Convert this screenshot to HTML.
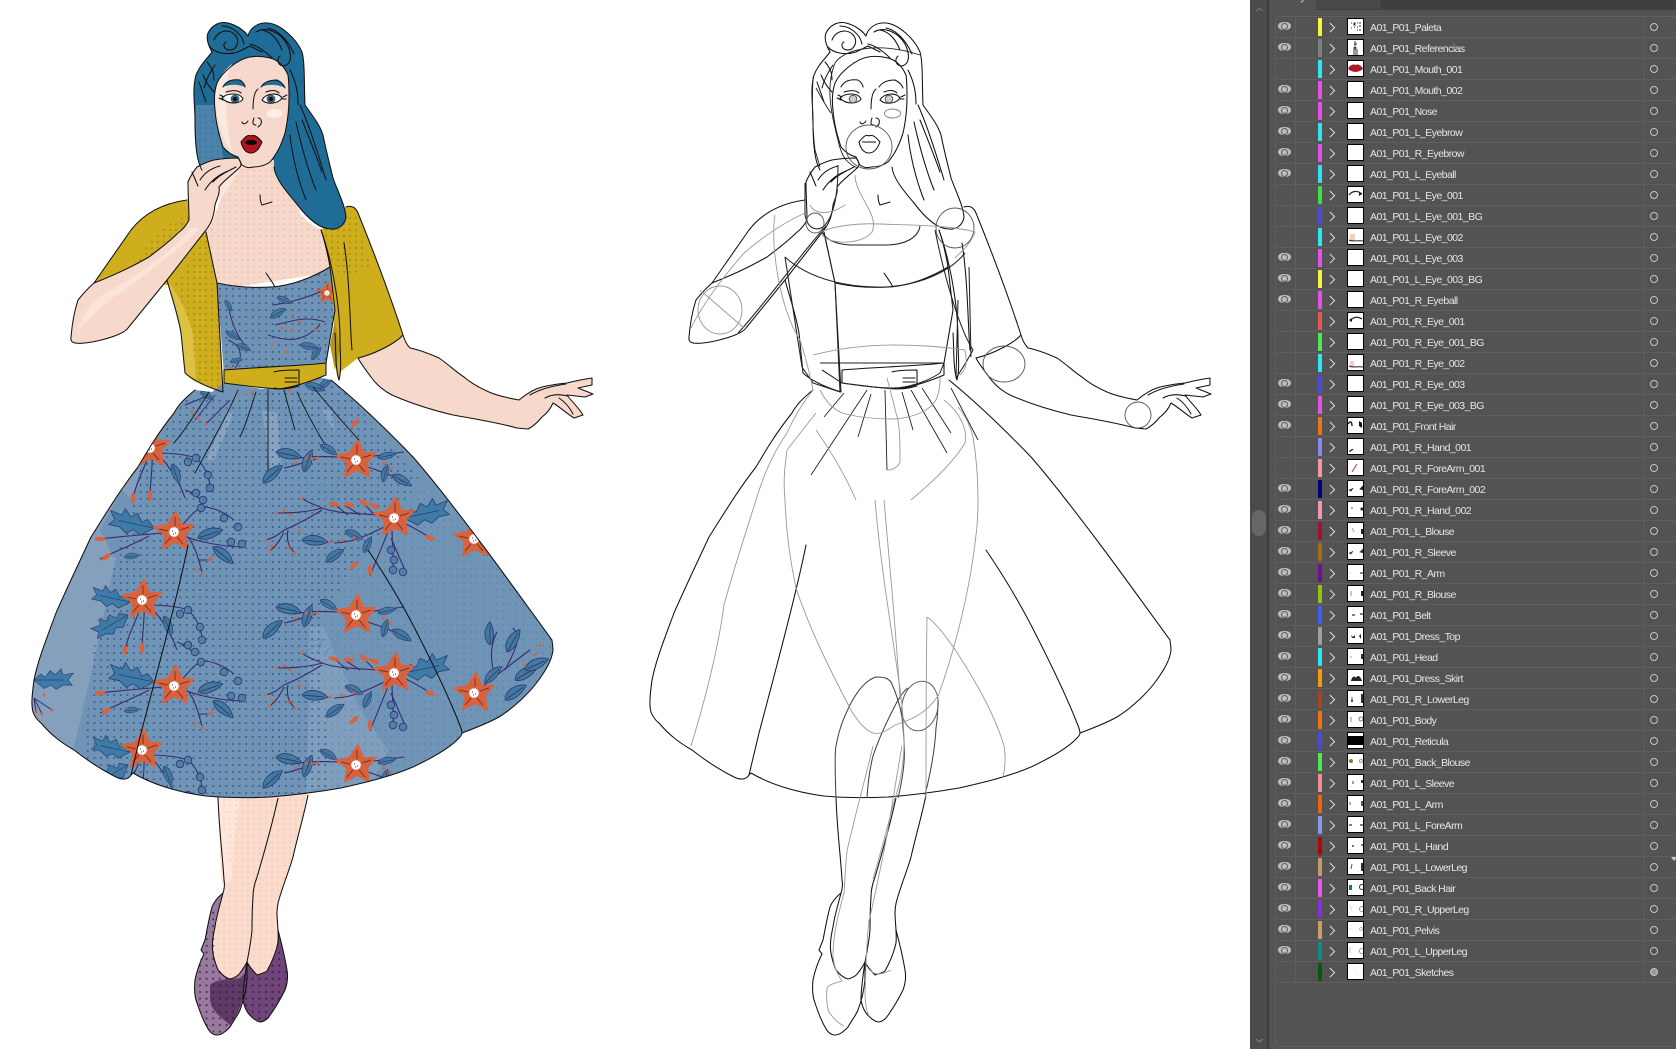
<!DOCTYPE html>
<html><head><meta charset="utf-8"><title>A01_P01</title>
<style>
html,body{margin:0;padding:0;background:#fff}
body{width:1676px;height:1049px;overflow:hidden;position:relative;font-family:"Liberation Sans",sans-serif}
#art{position:absolute;left:0;top:0}
#p{position:absolute;left:1250px;top:0;width:426px;height:1049px;background:#535353;overflow:hidden}
#sb{position:absolute;left:0;top:0;width:17px;height:1049px;background:#4b4b4b;border-right:2px solid #3c3c3c}
#th{position:absolute;left:2px;top:510px;width:14px;height:26px;background:#666;border-radius:7px}
#tabs{position:absolute;left:19px;top:0;right:0;height:10px;background:#3f3f3f}
#t1{position:absolute;left:0;top:0;width:47px;height:10px;background:#535353;color:#ddd;font-size:11px;line-height:0;overflow:hidden}
#t2{position:absolute;left:47px;top:0;width:65px;height:9px;background:#484848;border-right:1px solid #3a3a3a}
#box{position:absolute;left:25px;top:16px;right:-4px;height:1029px;border:1px solid #5f5f5f;border-radius:5px}
#l{position:absolute;left:25px;top:17px;width:401px}
.r{position:relative;height:20px;border-bottom:1px solid #5e5e5e;color:#e6e6e6;font-size:10.5px;letter-spacing:-.55px;line-height:21px}
.r::before,.r::after{content:"";position:absolute;top:0;bottom:-1px;width:1px;background:#5e5e5e}
.r::before{left:20px}.r::after{left:368px}
.e{position:absolute;left:3px;top:5px;width:13px;height:8px;background:#bcbcbc;border-radius:60%/70%}
.e::after{content:"";position:absolute;left:4px;top:1.5px;width:5px;height:5px;border-radius:50%;background:#bcbcbc;box-shadow:0 0 0 1px #5c5c5c}
.w{position:absolute;left:43px;top:1px;width:4px;height:18px}
.v{position:absolute;left:52px;top:7px;width:5.5px;height:5.5px;border-top:1.5px solid #e0e0e0;border-right:1.5px solid #e0e0e0;transform:rotate(45deg)}
.t{position:absolute;left:72px;top:1px;width:15px;height:15px;background:#fff;border:1px solid #000;padding:0;display:block}
.t svg{display:block;width:15px;height:15px}
.n{position:absolute;left:95px;top:1px;white-space:nowrap}
.o{position:absolute;left:375px;top:6px;width:6px;height:6px;border:1px solid #c4c4c4;border-radius:50%}
.o.f{background:#999}
</style></head><body>
<svg id="art" width="1250" height="1049" viewBox="0 0 1250 1049" xmlns="http://www.w3.org/2000/svg">
<defs>
<pattern id="dk" width="6.6" height="7" patternUnits="userSpaceOnUse"><circle cx="2" cy="2" r="1" fill="#27477a" opacity=".75"/></pattern>
<pattern id="dk2" width="6.6" height="7" patternUnits="userSpaceOnUse"><circle cx="2" cy="2" r=".8" fill="#3a5f8c" opacity=".45"/></pattern>
<pattern id="ds" width="6" height="6" patternUnits="userSpaceOnUse"><circle cx="2" cy="2" r=".8" fill="#dca98f" opacity=".8"/></pattern>
<pattern id="dy" width="6" height="6" patternUnits="userSpaceOnUse"><circle cx="2" cy="2" r=".9" fill="#8d7410" opacity=".8"/></pattern>
<pattern id="dp" width="6.6" height="6.6" patternUnits="userSpaceOnUse"><circle cx="2" cy="2" r="1.1" fill="#2a1836"/></pattern>
<pattern id="dh" width="6" height="6" patternUnits="userSpaceOnUse"><circle cx="2" cy="2" r=".7" fill="#245a85" opacity=".7"/></pattern>
<clipPath id="cs"><path d="M195,390C185,398 178,405 174,413C158,433 148,450 138,467C120,490 105,515 91,537C78,565 66,590 56,613C46,640 38,660 34,680C32,695 31,705 33,712C36,720 40,722 41,723C52,736 62,743 74,750C88,761 102,770 116,777C122,780 128,780 131,775L133,773C150,783 175,792 206,796C228,798 250,798 270,797C295,795 318,792 341,788C368,782 392,776 413,767C432,758 450,748 459,738L462,733C478,727 490,722 499,717C515,707 530,692 538,681C546,670 552,660 553,650C553,645 552,642 552,640C530,610 505,575 484,547C460,515 435,482 413,457C385,428 358,402 331,380L308,375C290,385 270,389 262,389L224,383L212,392Z"/></clipPath>
<clipPath id="cd"><path d="M217,283C235,287 255,288 271,287C290,286 312,278 330,267L335,310L326,363L224,370Z"/></clipPath>
<g id="f"><path d="M2,-22L8,-8L21,-8L12,3L14,18L1,11L-12,18L-10,3L-22,-5L-7,-8Z" fill="#d8623c"/><path d="M1,-15V-6M15,-5L6,-2M9,12L3,5M-9,12L-3,5M-15,-3L-6,-1" stroke="#5a2a3a" stroke-width=".8" fill="none"/><circle r="4.8" fill="#fff"/><path d="M-2,-1h1M1,1h1M-1,2h1" stroke="#334" stroke-width="1"/></g>
<path id="l" d="M0,0C5,-7 17,-8 26,0C17,5 6,6 0,0ZM2,0H22" fill="#41799f" stroke="#2b3470" stroke-width=".8"/>
<path id="h" d="M0,0L-8,-7L-13,-3L-19,-11L-25,-6L-32,-13L-34,-6L-46,-8L-40,0L-45,6L-34,6L-26,11L-20,6L-12,10ZM0,0H-36" fill="#3e7ba6" stroke="#2b3f70" stroke-width=".8"/>
<circle id="c" r="3.8" fill="#4f7fa6" stroke="#2b3470" stroke-width=".8"/>
<ellipse id="b" rx="5.5" ry="2.2" fill="#d8623c"/>
<circle id="d" r="1.5" fill="#d8623c"/>
<g id="mA">
<path d="M-30,24L-52,38M-30,24L-46,26M-34,28L-40,40M-25,30L-32,42M-18,18L-22,40" stroke="#5f90b4" stroke-width="1" fill="none"/>
<path d="M-62,-1C-40,-5 -20,-3 0,-2C15,-3 30,-6 48,-8M-40,-1C-55,3 -65,7 -72,8M2,4C15,8 28,12 36,16" stroke="#3a2a6e" stroke-width="1.1" fill="none"/>
<use href="#l" transform="translate(-80,-8) rotate(12)"/><use href="#l" transform="translate(-93,23) rotate(-42)"/><use href="#l" transform="translate(-52,12) rotate(-70) scale(.9)"/><use href="#l" transform="translate(-36,-15) rotate(30) scale(.75)"/><use href="#l" transform="translate(36,15) rotate(30) scale(.85)"/><use href="#l" transform="translate(27,22) rotate(-75) scale(.7)"/><use href="#l" transform="translate(22,-2) rotate(-12) scale(.7)"/>
<use href="#d" x="-50" y="-2"/><use href="#d" x="-44" y="-1"/><use href="#d" x="-38" y="-2"/><use href="#d" x="-60" y="3"/><use href="#d" x="28" y="3"/><use href="#d" x="34" y="8"/>
<use href="#f"/></g>
<g id="mB">
<path d="M0,0C-20,-6 -50,-2 -72,-10C-80,-14 -88,-16 -92,-20M-72,-10C-85,-6 -100,-5 -117,-5M-72,-8C-85,0 -100,8 -110,12C-115,16 -120,20 -128,22M-106,12C-108,22 -105,30 -99,35M-110,14C-115,24 -118,28 -124,33M0,4C-20,14 -40,25 -60,25M-4,8C-10,25 -18,42 -24,58M-2,8C-2,25 0,40 -1,52M-3,20L10,50M0,0C10,5 25,12 36,20M-20,-4L-30,-14M-34,-3L-48,-12M-46,-3L-60,-14" stroke="#3a2a6e" stroke-width="1.1" fill="none"/>
<use href="#b" transform="translate(-60,-14) rotate(15)"/><use href="#b" transform="translate(-45,-13) rotate(15)"/><use href="#b" transform="translate(-30,-15) rotate(35)"/><use href="#b" transform="translate(-20,-12) rotate(25)"/><use href="#b" transform="translate(36,20) rotate(20)"/><use href="#b" transform="translate(-40,47) rotate(-40)"/><use href="#b" transform="translate(-24,52) rotate(90)"/>
<use href="#h" transform="translate(10,0) scale(-1,1) rotate(12)"/>
<use href="#l" transform="translate(-92,22) rotate(5)"/><use href="#l" transform="translate(-68,44) rotate(-35) scale(.85)"/><use href="#l" transform="translate(-49,13) rotate(25) scale(.75)"/><use href="#l" transform="translate(-30,35) rotate(-65) scale(.7)"/>
<use href="#c" x="-3" y="32"/><use href="#c" x="0" y="42"/><use href="#c" x="-1" y="52"/><use href="#c" x="9" y="54"/>
<use href="#d" x="-117" y="-5"/><use href="#d" x="-110" y="-7"/><use href="#d" x="-104" y="-3"/><use href="#d" x="-92" y="-20"/><use href="#d" x="-128" y="22"/><use href="#d" x="-122" y="28"/><use href="#d" x="-124" y="33"/><use href="#d" x="-99" y="35"/><use href="#d" x="-105" y="30"/><use href="#d" x="-95" y="13"/><use href="#d" x="-64" y="24"/><use href="#d" x="-52" y="22"/><use href="#d" x="-40" y="20"/>
<use href="#f"/></g>
<g id="mC">
<path d="M0,0C-20,2 -50,4 -76,7M-25,4C-40,12 -60,20 -74,27M0,2C10,-8 20,-22 28,-25C40,-25 50,-20 60,-12M10,4C25,10 50,15 70,15M14,5C22,15 25,30 28,40M24,28L37,28" stroke="#3a2a6e" stroke-width="1.1" fill="none"/>
<use href="#h" transform="translate(-20,-4) rotate(12)"/>
<use href="#b" transform="translate(-74,7)"/><use href="#b" transform="translate(-68,25) rotate(-35)"/>
<use href="#l" transform="translate(-50,25) rotate(-5) scale(.6)"/>
<use href="#l" transform="translate(24,6) rotate(-18)"/><use href="#l" transform="translate(39,15) rotate(40)"/>
<use href="#c" x="27" y="-24"/><use href="#c" x="50" y="-14"/><use href="#c" x="64" y="-5"/><use href="#c" x="68" y="12"/><use href="#c" x="57" y="10"/>
<use href="#d" x="21" y="38"/><use href="#d" x="28" y="42"/><use href="#d" x="35" y="28"/><use href="#d" x="38" y="26"/>
<use href="#f"/></g>
<g id="mD">
<path d="M0,4C-5,20 -15,35 -17,53M2,4C3,20 0,35 0,50M5,5C20,5 35,6 46,10C55,18 60,30 60,40M10,8C20,20 30,35 35,50M35,42L46,46M40,45L53,52" stroke="#3a2a6e" stroke-width="1.1" fill="none"/>
<use href="#h" transform="translate(-12,2) rotate(12) scale(.85)"/><use href="#h" transform="translate(-14,15) rotate(-30) scale(.85)"/>
<use href="#b" transform="translate(-17,50) rotate(90)"/><use href="#b" transform="translate(0,48) rotate(90)"/>
<use href="#l" transform="translate(22,16) rotate(70) scale(.8)"/>
<use href="#c" x="46" y="10"/><use href="#c" x="38" y="14"/><use href="#c" x="58" y="27"/><use href="#c" x="60" y="40"/><use href="#c" x="46" y="45"/><use href="#c" x="53" y="52"/>
<use href="#f"/></g>
<!-- line art shared by both figures -->
<g id="ink" fill="none" stroke="#111" stroke-width="1.05" stroke-linejoin="round" stroke-linecap="round">
<path d="M208,33C212,25 220,21 228,23C236,25 244,30 248,36C250,28 258,22 268,23C280,24 296,38 302,52C305,62 304,85 305,105C312,115 320,125 323,135C327,155 330,165 333,178C338,192 345,205 346,217C345,225 338,230 331,229C318,229 305,215 296,203C285,190 275,178 274,167M202,170C196,160 195,140 195,120C195,105 192,90 196,75C200,65 206,60 212,52C208,45 206,38 208,33"/>
<path d="M214,40C218,30 230,28 236,36C240,42 236,50 230,50C224,50 222,44 226,42M210,47C214,52 226,56 238,52M222,26C232,26 242,34 244,44M256,32C266,26 280,32 287,44C292,54 292,64 284,66C278,66 276,60 280,56M262,30C272,32 278,40 282,50M268,28C278,30 288,40 294,54M250,44C258,46 266,52 272,58M238,52L250,46L262,52M290,70C296,82 298,92 298,104M203,75C206,82 210,88 214,92M199,82L206,102M302,120C308,135 316,155 322,172M296,122C300,140 306,165 316,190M290,135C292,155 298,180 306,200M215,65C210,72 206,80 204,88M300,105C306,118 314,140 326,180M207,62C212,68 214,72 214,80"/>
<path d="M250,57C238,59 222,72 217,83C214,92 214,102 215,110C216,125 220,138 223,147C228,153 234,156 238,157C240,161 241,164 242,165C246,168 250,168 253,167C260,167 266,165 270,162C277,154 282,143 285,133C288,120 289,108 289,97C289,88 289,82 288,75C284,66 278,60 270,58C262,56 256,56 250,57Z"/>
<path d="M242,122C243,125 246,124 248,121M254,118C252,124 253,125 256,125M258,118C262,118 263,124 258,127M258,89C254,92 253,100 253,109"/>
<path d="M222,98C226,93 240,92 243,99C240,104 228,105 222,98ZM262,100C266,93 278,92 282,98C278,104 267,105 262,100Z"/>
<path d="M219,98L223,100M220,95L224,97M283,97L287,95M282,99L286,99M226,92C232,90 238,90 241,93M266,92C271,90 276,90 279,93"/>
<path d="M241,142C245,137 248,134 251,136C254,134 258,137 262,142C259,150 255,153 251,153C247,153 243,150 241,142Z"/>
<path d="M260,195C260,200 261,203 262,205L272,202"/>
<path d="M223,87C226,81 232,79 240,80C243,82 245,85 245,87M261,87C264,82 270,80 277,80C281,82 284,85 285,88"/>
<path d="M71,337C70,343 75,344 85,343C95,342 110,338 117,335C122,333 126,331 128,328L167,280L206,230C212,222 214,215 215,205C217,198 220,194 219,187C224,180 232,175 239,168C243,165 240,160 238,158C228,158 220,159 214,160C206,162 201,165 197,167C193,172 190,177 188,182C188,195 189,210 189,220C186,226 182,230 178,233C168,243 158,250 149,257C130,268 112,276 94,283C86,290 82,295 78,300C74,312 72,325 71,337Z"/>
<path d="M200,180C205,172 212,168 220,166M205,190C210,182 218,175 228,171M213,182C218,176 226,172 236,167M192,172L198,186"/>
<path d="M94,283L131,230C145,212 165,203 187,200"/>
<path d="M206,232L217,283L223,392C210,388 195,382 185,373L181,333C178,315 172,298 167,280"/>
<path d="M217,283C235,287 255,288 271,287C290,286 312,278 330,267M266,273C270,279 273,283 275,287"/>
<path d="M321,230C326,245 328,255 330,267L335,310L326,363"/>
<path d="M321,230C330,255 340,300 340,340C340,355 342,368 339,380C335,370 336,345 335,333M344,243C350,280 350,330 352,350M346,207C352,205 356,208 358,213C375,255 390,295 403,335C396,343 375,354 358,358"/>
<path d="M224,370C260,367 300,366 326,363V375C310,382 290,388 278,389C260,388 240,385 224,383ZM274,372C280,370 295,370 299,370V386C292,388 282,390 274,388M285,378H297M285,382H297"/>
<path d="M403,335C405,342 408,346 410,348C420,350 430,354 439,358C448,364 456,372 464,377C472,384 480,388 489,392C498,396 508,398 519,400C524,396 532,390 539,388C548,385 558,384 567,383C575,381 585,379 592,378L592,385L578,388L593,394L585,397L567,395C572,402 579,408 583,415L574,418C566,413 560,407 553,403C550,410 546,414 542,417C537,423 532,427 528,429L517,428C495,422 475,419 453,415C432,410 410,403 392,395C382,390 376,384 371,377C366,370 361,364 358,358"/>
<path d="M530,395C540,389 552,386 566,384M545,398C552,394 560,394 568,396M559,398C565,402 570,408 573,414"/>
<path d="M195,390C185,398 178,405 174,413C158,433 148,450 138,467C120,490 105,515 91,537C78,565 66,590 56,613C46,640 38,660 34,680C32,695 31,705 33,712C36,720 40,722 41,723C52,736 62,743 74,750C88,761 102,770 116,777C122,780 128,780 131,775L133,773C150,783 175,792 206,796C228,798 250,798 270,797C295,795 318,792 341,788C368,782 392,776 413,767C432,758 450,748 459,738C462,735 462,733 462,733C478,727 490,722 499,717C515,707 530,692 538,681C546,670 552,660 553,650C553,645 552,642 552,640C530,610 505,575 484,547C460,515 435,482 413,457C385,428 358,402 331,380"/>
<path d="M188,545C178,595 155,680 141,733L131,775M368,550C385,575 400,600 413,625C432,662 450,700 459,723C462,730 462,733 462,733"/>
</g>
<g id="pleats" fill="none" stroke="#111" stroke-width=".9" stroke-linecap="round">
<path d="M268,390V470M256,392C250,410 246,425 240,437M238,390C225,420 210,445 195,473M209,392C198,410 185,430 174,443M284,390C288,405 292,420 295,430M297,392C305,410 315,428 324,443M313,387C328,405 345,425 359,440"/>
</g>
<g id="legs" fill="none" stroke="#111" stroke-width="1.05" stroke-linejoin="round">
<path d="M218,797C219,830 223,860 224,880C225,885 224,890 223,893C220,905 216,918 215,927C212,940 212,948 213,953C214,960 216,965 218,970C222,975 226,978 230,979C234,978 238,976 240,973C243,969 245,966 247,962C250,968 254,972 257,975C260,974 264,973 267,971C272,962 276,952 278,943C279,933 277,922 277,913C277,905 279,899 281,893C285,880 290,868 293,857C298,835 304,815 308,795"/>
<path d="M278,798C272,825 265,850 257,877C254,885 253,892 253,897C252,910 252,920 252,930C251,942 249,952 247,962"/>
<path d="M223,893C218,897 214,902 212,907C209,918 207,930 205,940L201,950L204,954C200,962 197,970 195,980C194,990 195,998 197,1003C200,1012 203,1020 207,1027C210,1033 214,1035 217,1035C222,1035 226,1031 230,1027C234,1020 238,1015 240,1010C243,1002 246,990 247,980V962"/>
<path d="M247,962C245,975 243,988 243,1000C244,1006 246,1010 248,1013C252,1018 256,1021 260,1022C263,1022 266,1020 268,1018C274,1010 280,1000 285,990C288,982 288,976 287,970C285,958 282,945 278,930"/>
</g>
</defs>

<!-- ============ coloured figure ============ -->
<path d="M94,283L131,230C145,212 165,203 187,200L210,240L170,285Z" fill="#cfae1e"/>
<path d="M135,265C148,240 165,222 190,215L200,240L165,270Z" fill="url(#dy)"/>
<path d="M228,165L276,165C278,190 300,220 321,230L332,272L217,290L206,232C215,215 225,195 228,165Z" fill="#f6d9cb"/>
<path d="M228,165L276,165C278,190 300,220 321,230L332,272L217,290L206,232C215,215 225,195 228,165Z" fill="url(#ds)"/>
<path d="M217,283C235,287 255,288 271,287C290,286 312,278 330,267L335,310L326,363L224,375Z" fill="#6f93b5"/>
<path d="M217,283C235,287 255,288 271,287C290,286 312,278 330,267L335,310L326,363L224,375Z" fill="url(#dk)"/>
<g clip-path="url(#cd)">
<use href="#f" transform="translate(327,293) scale(.55)"/>
<path d="M272,305C290,303 305,298 320,292M268,335C285,340 300,345 320,325M275,325C290,322 305,315 325,322M228,305C232,325 238,340 250,350M228,340C240,345 245,355 235,368" stroke="#3a2a6e" stroke-width="1" fill="none"/>
<use href="#l" transform="translate(270,318) rotate(-30) scale(.7)"/><use href="#l" transform="translate(277,297) rotate(25) scale(.6)"/><use href="#l" transform="translate(300,345) rotate(10) scale(.7)"/><use href="#l" transform="translate(312,360) rotate(-55) scale(.6)"/>
<use href="#l" transform="translate(225,300) rotate(60) scale(.5)"/><use href="#l" transform="translate(226,332) rotate(30) scale(.6)"/><use href="#l" transform="translate(236,345) rotate(20) scale(.6)"/><use href="#l" transform="translate(230,362) rotate(-10) scale(.5)"/>
<use href="#d" x="292" y="330"/><use href="#d" x="282" y="328"/><use href="#d" x="300" y="322"/><use href="#d" x="272" y="345"/><use href="#d" x="286" y="352"/><use href="#d" x="293" y="315"/><use href="#d" x="230" y="368"/><use href="#d" x="315" y="330"/>
</g>
<path d="M403,335C405,342 408,346 410,348C420,350 430,354 439,358C448,364 456,372 464,377C472,384 480,388 489,392C498,396 508,398 519,400C524,396 532,390 539,388C548,385 558,384 567,383C575,381 585,379 592,378L592,385L578,388L593,394L585,397L567,395C572,402 579,408 583,415L574,418C566,413 560,407 553,403C550,410 546,414 542,417C537,423 532,427 528,429L517,428C495,422 475,419 453,415C432,410 410,403 392,395C382,390 376,384 371,377C366,370 361,364 358,358Z" fill="#f6d9cb"/>
<path d="M321,230L346,207C352,205 356,208 358,213C375,255 390,295 403,335C396,343 375,354 358,358L340,372L339,380C335,370 336,345 335,333L330,267Z" fill="#cfae1e"/>
<path d="M323,232L346,210L356,215L372,270L340,275L332,262Z" fill="url(#dy)"/>
<path d="M335,320L340,350L335,370L330,345Z" fill="#b1941a"/>
<path d="M206,232L217,283L223,392C210,388 195,382 185,373L181,333C178,315 172,298 167,280Z" fill="#cfae1e"/>
<path d="M167,280C172,298 178,315 181,333L185,373C190,378 192,380 196,382L194,340C190,315 178,295 167,280Z" fill="#dcc143"/>
<path d="M206,232L217,283L223,392L196,382L192,330L175,285Z" fill="url(#dy)"/>
<path d="M218,790H308C304,815 298,835 293,857C290,868 285,880 281,893C279,899 277,905 277,913C277,922 279,933 278,943C276,952 272,962 267,971L257,975L247,962C245,966 243,969 240,973C238,976 234,978 230,979C226,978 222,975 218,970C216,965 214,960 213,953C212,948 212,940 215,927C216,918 220,905 223,893C224,890 225,885 224,880C223,860 219,830 218,790Z" fill="#fbdccc"/>
<path d="M218,795H240C236,825 232,860 232,880L222,885C220,860 219,830 218,795Z" fill="#fee6db"/>
<path d="M218,790H308C304,815 298,835 293,857C290,868 285,880 281,893C279,899 277,905 277,913C277,922 279,933 278,943C276,952 272,962 267,971L257,975L247,962C245,966 243,969 240,973C238,976 234,978 230,979C226,978 222,975 218,970L215,927L232,880Z" fill="url(#ds)" opacity=".7"/>
<path d="M223,893C218,897 214,902 212,907C209,918 207,930 205,940L201,950L204,954C200,962 197,970 195,980C194,990 195,998 197,1003C200,1012 203,1020 207,1027C210,1033 214,1035 217,1035C222,1035 226,1031 230,1027C234,1020 238,1015 240,1010C243,1002 246,990 247,980V962C245,966 243,969 240,973C238,976 234,978 230,979C226,978 222,975 218,970C216,965 214,960 213,953C212,948 212,940 215,927C216,918 220,905 223,893Z" fill="#997a9f"/>
<path d="M210,985C218,978 230,980 240,978L246,972L246,985C243,1000 238,1015 230,1025C222,1018 212,1012 210,1000Z" fill="#5f3a66"/>
<path d="M247,962C245,975 243,988 243,1000C244,1006 246,1010 248,1013C252,1018 256,1021 260,1022C263,1022 266,1020 268,1018C274,1010 280,1000 285,990C288,982 288,976 287,970C285,958 282,945 278,930C278,952 272,962 267,971L257,975Z" fill="#70467a"/>
<path d="M203,950L205,940L212,907L218,910L214,950C213,960 216,968 230,980L247,980L246,990L240,1010L230,1027L217,1035L207,1027L197,1003L195,980Z" fill="url(#dp)" opacity=".7"/>
<path d="M247,968L257,978L267,975L278,945L287,970L285,990L268,1018L260,1022L248,1013L243,1000Z" fill="url(#dp)" opacity=".75"/>
<g clip-path="url(#cs)">
<rect x="20" y="370" width="550" height="440" fill="#7094b6"/>
<path d="M20,810V560L116,557L97,647L74,747L90,810Z M150,430L132,500L122,490L100,530L115,560L20,570V400Z" fill="#84a0bd"/>
<path d="M309,627L324,627L359,707L388,750L370,790L306,800L309,713Z" fill="#7f9dbd"/>
<path d="M227,413L206,460L214,460L234,413ZM262,410L270,467L281,463L277,413ZM322,410L335,433L332,410Z" fill="#87a3bf"/>
<path d="M93,650L116,557L140,470L185,400L340,385L420,480L360,560L320,620L330,800H80Z" fill="url(#dk)"/>
<path d="M320,620L360,560L420,480L560,640V800H320Z" fill="url(#dk2)"/>
<use href="#mA" x="356" y="460"/><use href="#mA" x="356" y="615"/><use href="#mA" x="356" y="765"/>
<use href="#mB" x="394" y="518"/><use href="#mB" x="394" y="673"/>
<use href="#mC" x="174" y="532"/><use href="#mC" x="174" y="686"/>
<use href="#mD" x="142" y="600"/><use href="#mD" x="142" y="750"/><use href="#mD" x="150" y="448"/>
<use href="#h" transform="translate(34,680) scale(-.85,.85) rotate(0)"/>
<path d="M34,698L52,710M34,698L42,714M34,698L36,712" stroke="#3a2a6e" fill="none"/>
<use href="#d" x="52" y="710"/><use href="#d" x="42" y="714"/><use href="#d" x="44" y="695"/><use href="#d" x="36" y="712"/>
<use href="#f" x="474" y="539"/>
<path d="M474,693C490,680 510,665 530,650M495,677C490,660 490,645 497,632M505,670C515,650 522,640 513,628" stroke="#3a2a6e" stroke-width="1.1" fill="none"/>
<use href="#l" transform="translate(490,645) rotate(-90) scale(.9)"/><use href="#l" transform="translate(507,652) rotate(-60)"/><use href="#l" transform="translate(485,683) rotate(-45) scale(.9)"/><use href="#l" transform="translate(505,700) rotate(-35)"/><use href="#l" transform="translate(515,680) rotate(-30)"/><use href="#l" transform="translate(525,670) rotate(-25)"/>
<use href="#d" x="540" y="645"/><use href="#d" x="535" y="655"/><use href="#d" x="525" y="665"/>
<use href="#f" x="474" y="693"/>
<path d="M195,420L215,395M205,425L230,400M185,405L210,395" stroke="#3a2a6e" stroke-width="1" fill="none"/><use href="#l" transform="translate(200,392) rotate(30) scale(.6)"/><use href="#d" x="198" y="418"/><use href="#d" x="206" y="424"/><use href="#d" x="192" y="412"/>
<use href="#l" transform="translate(305,385) rotate(15) scale(.8)"/><use href="#l" transform="translate(320,388) rotate(-40) scale(.7)"/><use href="#b" transform="translate(355,423) rotate(-50)"/><use href="#d" x="371" y="412"/>
<use href="#d" x="252" y="392"/><use href="#d" x="289" y="391"/>
</g>
<use href="#pleats"/>
<path d="M224,370C260,367 300,366 326,363V375C310,382 290,388 278,389C260,388 240,385 224,383Z" fill="#cfae1e"/>
<path d="M208,33C212,25 220,21 228,23C236,25 244,30 248,36C250,28 258,22 268,23C280,24 296,38 302,52C305,62 304,85 305,105C312,115 320,125 323,135C327,155 330,165 333,178C338,192 345,205 346,217C345,225 338,230 331,229C318,229 305,215 296,203C285,190 275,178 274,167L240,170L228,187L202,170C196,160 195,140 195,120C195,105 192,90 196,75C200,65 206,60 212,52C208,45 206,38 208,33Z" fill="#1f6c97"/>
<path d="M196,105L215,105L222,150L228,187L202,170C196,160 195,130 196,105Z" fill="#4d83aa"/>
<path d="M196,105L215,105L222,150L228,187L202,170C196,160 195,130 196,105Z" fill="url(#dh)"/>
<path d="M240,160L274,160L274,167C275,178 285,190 296,203L300,212L215,217L225,190Z" fill="#f6d9cb"/>
<path d="M240,160L274,160L274,167C275,178 285,190 296,203L300,212L215,217L225,190Z" fill="url(#ds)"/>
<path d="M250,57C238,59 222,72 217,83C214,92 214,102 215,110C216,125 220,138 223,147C228,153 234,156 238,157C240,161 241,164 242,165C246,168 250,168 253,167C260,167 266,165 270,162C277,154 282,143 285,133C288,120 289,108 289,97C289,88 289,82 288,75C284,66 278,60 270,58C262,56 256,56 250,57Z" fill="#f6d9cc"/>
<path d="M232,64C222,72 217,80 215,95C217,120 222,140 232,152C228,135 226,115 226,100C226,85 228,72 232,64Z" fill="#fbe8df"/>
<ellipse cx="274.5" cy="113.500" rx="8" ry="4.500" fill="#fbeee8"/>
<path d="M223,87C226,81 232,79 240,80C243,82 245,85 245,87C238,84 230,84 223,87ZM261,87C264,82 270,80 277,80C281,82 284,85 285,88C278,84 268,84 261,87Z" fill="#1f6c97"/>
<path d="M222,98C226,93 240,92 243,99C240,104 228,105 222,98ZM262,100C266,93 278,92 282,98C278,104 267,105 262,100Z" fill="#fff"/>
<circle cx="235" cy="99" r="4.400" fill="#3c6680"/><circle cx="271" cy="99" r="4.400" fill="#3c6680"/><circle cx="235" cy="99" r="2" fill="#111"/><circle cx="271" cy="99" r="2" fill="#111"/>
<path d="M241,142C245,137 248,134 251,136C254,134 258,137 262,142C259,150 255,153 251,153C247,153 243,150 241,142Z" fill="#b2141d"/>
<ellipse cx="251" cy="142.500" rx="6" ry="2.500" fill="#0a0a0a"/>
<path d="M71,337C70,343 75,344 85,343C95,342 110,338 117,335C122,333 126,331 128,328L167,280L206,230C212,222 214,215 215,205C217,198 220,194 219,187C224,180 232,175 239,168C243,165 240,160 238,158C228,158 220,159 214,160C206,162 201,165 197,167C193,172 190,177 188,182C188,195 189,210 189,220C186,226 182,230 178,233C168,243 158,250 149,257C130,268 112,276 94,283C86,290 82,295 78,300C74,312 72,325 71,337Z" fill="#f6d9cb"/>
<path d="M78,330C85,305 100,295 125,282C150,265 175,250 190,228L200,228C180,250 150,270 125,290C100,305 90,320 78,330Z" fill="#fae4da"/>
<path d="M228,175L240,168L228,190L219,200L219,187Z" fill="#fae6dd"/>
<use href="#legs"/>
<use href="#ink"/>
<!-- ============ sketch figure ============ -->
<g transform="translate(618,0)"><use href="#ink"/><use href="#legs"/></g>
<circle cx="853" cy="99" r="3.800" fill="#ccc" stroke="#555"/><circle cx="889" cy="99" r="3.800" fill="#ccc" stroke="#555"/>
<ellipse cx="892.500" cy="113.500" rx="8" ry="4.500" fill="none" stroke="#888"/>
<path d="M862,142H876" stroke="#111" fill="none"/>
<g fill="none" stroke="#222" stroke-width="1.05" stroke-linejoin="round">
<path d="M785,257C810,280 850,288 885,287C920,285 950,272 965,253"/>
<path d="M822,232C826,240 835,244 850,245L885,245C905,245 918,238 920,226"/>
<path d="M785,257L802,367L813,383L840,392L835,283L824,233"/>
<path d="M805,183L805,215C808,230 818,232 825,225C834,215 838,195 838,165M738,333C760,310 800,255 826,226"/>
<path d="M935,230C945,280 960,330 973,350C965,365 960,372 956,378L958,300"/>
<path d="M969,267L971,357"/>
<path d="M820,363C850,363 910,363 944,363L940,373C925,383 905,388 893,388C875,388 855,385 842,383L822,370"/>
<path d="M844,393L824,417M867,390L811,475M871,394L858,437M885,390L887,470M902,392L913,430M911,390L947,453M922,388L951,433M951,388L978,440" stroke-width=".9"/>
<path d="M836,798C835,770 835,750 836,746C840,725 845,715 851,703C858,690 866,680 876,677C884,677 888,678 891,682C897,695 900,705 902,717C904,735 905,750 904,763C903,775 900,790 898,798M867,798C868,780 870,768 873,756C880,735 890,715 898,700C904,690 908,688 908,688M925,795C930,775 935,750 936,728C938,715 938,705 938,700" stroke="#444"/>
<path d="M835,63C826,85 830,110 838,140C842,160 850,165 858,168M835,63C845,48 880,42 920,55M813,77C812,100 812,125 815,150L820,167M831,113C825,105 820,95 816,88" stroke-width=".9"/>
</g>
<g fill="none" stroke="#555" stroke-width=".9"><ellipse cx="869" cy="147" rx="23" ry="22"/><ellipse cx="815" cy="223" rx="9" ry="10"/><ellipse cx="955" cy="228" rx="19" ry="20"/><ellipse cx="1004" cy="364" rx="21" ry="18"/><ellipse cx="1138" cy="415" rx="13" ry="13"/><ellipse cx="720" cy="310" rx="22" ry="24" stroke="#999"/><ellipse cx="920" cy="706" rx="18" ry="25" transform="rotate(10 920 706)"/></g>
<g fill="none" stroke="#999" stroke-width=".9">
<path d="M818,233C835,225 860,223 880,224C910,225 950,225 975,232C970,245 963,250 955,258"/>
<path d="M691,328C705,300 725,275 744,253C765,235 785,222 805,213"/>
<path d="M855,175C855,195 880,215 872,232C862,245 830,245 822,235M845,205C830,215 815,215 810,205M700,290L744,328"/>
<path d="M813,355C840,348 865,345 893,345C920,345 945,347 965,350C968,365 965,370 960,375M775,215C770,245 780,310 800,340C805,355 810,375 813,390"/>
<path d="M820,390C826,402 832,408 842,413C860,418 880,419 893,419C915,418 930,410 936,400C940,390 940,385 940,377"/>
<path d="M787,450L816,413M785,500C783,480 785,465 787,450M856,500C845,475 830,450 816,430M911,500C935,480 955,460 965,443C968,430 960,412 944,400M978,500C978,480 976,455 973,437C970,425 965,415 958,407M756,500C765,470 775,450 787,433C795,415 805,400 813,390M887,470C895,470 900,465 900,460C900,440 900,425 896,413C893,400 890,390 887,378"/>
<path d="M756,500C745,535 735,565 724,605C718,650 705,700 691,746"/>
<path d="M785,500C786,530 790,560 796,588C810,630 830,670 851,710C858,722 865,730 873,733C880,735 888,730 895,725C910,720 925,715 938,696C955,650 970,590 976,535C978,520 978,510 978,500"/>
<path d="M875,500C880,560 890,620 898,675C902,700 904,725 904,746C903,770 900,785 895,798C888,825 880,855 873,879"/>
<path d="M884,500C890,570 897,640 900,700"/>
<path d="M927,617C926,680 926,740 926,798M927,617C935,622 945,635 956,651C975,680 995,715 1004,746C1006,757 1005,768 1003,777"/>
<path d="M873,746C865,780 855,815 847,851C845,870 845,880 844,893C838,915 833,935 833,956C834,968 838,975 842,981C835,983 830,984 827,988C826,998 827,1006 829,1012C833,1018 838,1023 844,1026"/>
<path d="M902,746C895,785 890,820 884,851C878,880 874,900 869,921C866,945 866,970 865,991C865,1002 866,1010 869,1016M868,968C873,975 880,976 891,970"/>
</g>
</svg>

<div id="p">
<div id="sb"><svg width="17" height="1049" style="position:absolute;left:0;top:0"><path d="M6,11L9.500,8L13,11" fill="none" stroke="#777" stroke-width="1"/><path d="M6,1039L9.500,1042L13,1039" fill="none" stroke="#888" stroke-width="1"/></svg><div id="th"></div></div>
<div id="tabs"><div id="t1"><span style="position:relative;left:19px;top:-3px">Layers</span></div><div id="t2"></div></div>
<div id="box"></div>
<div id="l">
<div class="r"><i class="e"></i><b class="w" style="background:#f4f43c"></b><i class="v"></i><s class="t"><svg viewBox="0 0 15 15"><path d="M3,4h1M6,4h1v2h-1zM9,4h1M11,4h2M11,7h2M9,8h1M6,8h1M3,9h1M9,11h1M11,11h2" stroke="#333" fill="none"/></svg></s><span class="n">A01_P01_Paleta</span><i class="o"></i></div>
<div class="r"><i class="e"></i><b class="w" style="background:#808080"></b><i class="v"></i><s class="t"><svg viewBox="0 0 15 15"><path d="M7,1v5M6,4h3" stroke="#333"/><path d="M5,9h5v6h-5z" fill="#999"/><circle cx="7" cy="8" r="1.500" fill="#444"/></svg></s><span class="n">A01_P01_Referencias</span><i class="o"></i></div>
<div class="r"><b class="w" style="background:#2fe4ee"></b><i class="v"></i><s class="t"><svg viewBox="0 0 15 15"><path d="M0,7.500C3,3 6,3 7.500,4C9,3 12,3 15,7.500C12,12 3,12 0,7.500Z" fill="#b01a22"/></svg></s><span class="n">A01_P01_Mouth_001</span><i class="o"></i></div>
<div class="r"><i class="e"></i><b class="w" style="background:#e650e6"></b><i class="v"></i><s class="t"></s><span class="n">A01_P01_Mouth_002</span><i class="o"></i></div>
<div class="r"><i class="e"></i><b class="w" style="background:#e650e6"></b><i class="v"></i><s class="t"></s><span class="n">A01_P01_Nose</span><i class="o"></i></div>
<div class="r"><i class="e"></i><b class="w" style="background:#2fe4ee"></b><i class="v"></i><s class="t"></s><span class="n">A01_P01_L_Eyebrow</span><i class="o"></i></div>
<div class="r"><i class="e"></i><b class="w" style="background:#e650e6"></b><i class="v"></i><s class="t"></s><span class="n">A01_P01_R_Eyebrow</span><i class="o"></i></div>
<div class="r"><i class="e"></i><b class="w" style="background:#2fe4ee"></b><i class="v"></i><s class="t"></s><span class="n">A01_P01_L_Eyeball</span><i class="o"></i></div>
<div class="r"><b class="w" style="background:#40e040"></b><i class="v"></i><s class="t"><svg viewBox="0 0 15 15"><path d="M1,8C4,4 9,3 14,7" stroke="#222" stroke-width="1.200" fill="none"/><path d="M11,6l3,1l-3,2z" fill="#111"/></svg></s><span class="n">A01_P01_L_Eye_001</span><i class="o"></i></div>
<div class="r"><b class="w" style="background:#4a4ae0"></b><i class="v"></i><s class="t"></s><span class="n">A01_P01_L_Eye_001_BG</span><i class="o"></i></div>
<div class="r"><b class="w" style="background:#2fe4ee"></b><i class="v"></i><s class="t"><svg viewBox="0 0 15 15"><path d="M2,5h5v6h-5z" fill="#f3cfc2"/><path d="M1,11C5,13 10,11 15,12" stroke="#222" fill="none"/></svg></s><span class="n">A01_P01_L_Eye_002</span><i class="o"></i></div>
<div class="r"><i class="e"></i><b class="w" style="background:#e650e6"></b><i class="v"></i><s class="t"></s><span class="n">A01_P01_L_Eye_003</span><i class="o"></i></div>
<div class="r"><i class="e"></i><b class="w" style="background:#f4f43c"></b><i class="v"></i><s class="t"></s><span class="n">A01_P01_L_Eye_003_BG</span><i class="o"></i></div>
<div class="r"><i class="e"></i><b class="w" style="background:#e650e6"></b><i class="v"></i><s class="t"></s><span class="n">A01_P01_R_Eyeball</span><i class="o"></i></div>
<div class="r"><b class="w" style="background:#e85555"></b><i class="v"></i><s class="t"><svg viewBox="0 0 15 15"><path d="M14,6C9,3 5,4 2,8" stroke="#222" stroke-width="1.200" fill="none"/><path d="M4,5l-3,2l3,2z" fill="#111"/></svg></s><span class="n">A01_P01_R_Eye_001</span><i class="o"></i></div>
<div class="r"><b class="w" style="background:#4fe84f"></b><i class="v"></i><s class="t"></s><span class="n">A01_P01_R_Eye_001_BG</span><i class="o"></i></div>
<div class="r"><b class="w" style="background:#2fe4ee"></b><i class="v"></i><s class="t"><svg viewBox="0 0 15 15"><path d="M1,11C5,13 10,11 15,12" stroke="#222" fill="none"/><path d="M2,6h4v5h-4z" fill="#f3cfc2"/></svg></s><span class="n">A01_P01_R_Eye_002</span><i class="o"></i></div>
<div class="r"><i class="e"></i><b class="w" style="background:#4a4ae0"></b><i class="v"></i><s class="t"></s><span class="n">A01_P01_R_Eye_003</span><i class="o"></i></div>
<div class="r"><i class="e"></i><b class="w" style="background:#e650e6"></b><i class="v"></i><s class="t"></s><span class="n">A01_P01_R_Eye_003_BG</span><i class="o"></i></div>
<div class="r"><i class="e"></i><b class="w" style="background:#ee7510"></b><i class="v"></i><s class="t"><svg viewBox="0 0 15 15"><path d="M0,6C2,3 4,3 4,8" stroke="#111" fill="none" stroke-width="1.300"/><path d="M11,3l3,2v5l-3,-2z" fill="#111"/></svg></s><span class="n">A01_P01_Front Hair</span><i class="o"></i></div>
<div class="r"><b class="w" style="background:#8888ee"></b><i class="v"></i><s class="t"><svg viewBox="0 0 15 15"><path d="M1,12l3,-2h2l-4,3z" fill="#222"/></svg></s><span class="n">A01_P01_R_Hand_001</span><i class="o"></i></div>
<div class="r"><b class="w" style="background:#f498a8"></b><i class="v"></i><s class="t"><svg viewBox="0 0 15 15"><path d="M4,12L9,4" stroke="#a66" stroke-width="1.200"/></svg></s><span class="n">A01_P01_R_ForeArm_001</span><i class="o"></i></div>
<div class="r"><i class="e"></i><b class="w" style="background:#000080"></b><i class="v"></i><s class="t"><svg viewBox="0 0 15 15"><path d="M1,9l2,1l2,-3M12,8l3,-3v4z" stroke="#222" fill="#222" stroke-width=".8"/></svg></s><span class="n">A01_P01_R_ForeArm_002</span><i class="o"></i></div>
<div class="r"><i class="e"></i><b class="w" style="background:#f498b0"></b><i class="v"></i><s class="t"><svg viewBox="0 0 15 15"><path d="M3,6h2M13,6h2v2h-2z" stroke="#222" fill="#222" stroke-width=".8"/></svg></s><span class="n">A01_P01_R_Hand_002</span><i class="o"></i></div>
<div class="r"><i class="e"></i><b class="w" style="background:#a01038"></b><i class="v"></i><s class="t"><svg viewBox="0 0 15 15"><path d="M4,5l2,4" stroke="#aa9" stroke-width="1.200"/><path d="M13,6h2v5h-2z" fill="#222"/></svg></s><span class="n">A01_P01_L_Blouse</span><i class="o"></i></div>
<div class="r"><i class="e"></i><b class="w" style="background:#a07010"></b><i class="v"></i><s class="t"><svg viewBox="0 0 15 15"><path d="M1,9l2,1l2,-3M12,8l3,-3v4z" stroke="#553" fill="#222" stroke-width=".8"/></svg></s><span class="n">A01_P01_R_Sleeve</span><i class="o"></i></div>
<div class="r"><i class="e"></i><b class="w" style="background:#701090"></b><i class="v"></i><s class="t"><svg viewBox="0 0 15 15"><path d="M12,7h3v2h-3z" fill="#888"/><path d="M1,8h2" stroke="#ccc"/></svg></s><span class="n">A01_P01_R_Arm</span><i class="o"></i></div>
<div class="r"><i class="e"></i><b class="w" style="background:#98c010"></b><i class="v"></i><s class="t"><svg viewBox="0 0 15 15"><path d="M3,5v5" stroke="#bb8" stroke-width="1.500"/><path d="M13,5h2v5h-2z" fill="#222"/></svg></s><span class="n">A01_P01_R_Blouse</span><i class="o"></i></div>
<div class="r"><i class="e"></i><b class="w" style="background:#4060f0"></b><i class="v"></i><s class="t"><svg viewBox="0 0 15 15"><path d="M4,8h3M12,7h3" stroke="#333" stroke-width="1.200"/></svg></s><span class="n">A01_P01_Belt</span><i class="o"></i></div>
<div class="r"><i class="e"></i><b class="w" style="background:#a0a0a0"></b><i class="v"></i><s class="t"><svg viewBox="0 0 15 15"><path d="M3,7l2,2l2,-2v3h-3zM11,8l2,-2v5z" fill="#222"/></svg></s><span class="n">A01_P01_Dress_Top</span><i class="o"></i></div>
<div class="r"><i class="e"></i><b class="w" style="background:#2fe4ee"></b><i class="v"></i><s class="t"><svg viewBox="0 0 15 15"><path d="M2,8h2" stroke="#99a"/><path d="M13,5h2v5h-2z" fill="#333"/></svg></s><span class="n">A01_P01_Head</span><i class="o"></i></div>
<div class="r"><i class="e"></i><b class="w" style="background:#f89a10"></b><i class="v"></i><s class="t"><svg viewBox="0 0 15 15"><path d="M3,11C4,7 6,5 8,8C9,5 12,5 14,11Z" fill="#222"/></svg></s><span class="n">A01_P01_Dress_Skirt</span><i class="o"></i></div>
<div class="r"><i class="e"></i><b class="w" style="background:#a04820"></b><i class="v"></i><s class="t"><svg viewBox="0 0 15 15"><path d="M4,5l-1,6h2zM13,3h2v9h-2z" fill="#333"/></svg></s><span class="n">A01_P01_R_LowerLeg</span><i class="o"></i></div>
<div class="r"><i class="e"></i><b class="w" style="background:#ee7510"></b><i class="v"></i><s class="t"><svg viewBox="0 0 15 15"><path d="M3,5v5" stroke="#bab" stroke-width="1.500"/><circle cx="13" cy="7" r="2" fill="none" stroke="#777"/></svg></s><span class="n">A01_P01_Body</span><i class="o"></i></div>
<div class="r"><i class="e"></i><b class="w" style="background:#4a4ae0"></b><i class="v"></i><s class="t"><svg viewBox="0 0 15 15"><path d="M0,3h15v9h-15z" fill="#000"/></svg></s><span class="n">A01_P01_Reticula</span><i class="o"></i></div>
<div class="r"><i class="e"></i><b class="w" style="background:#50e850"></b><i class="v"></i><s class="t"><svg viewBox="0 0 15 15"><circle cx="3" cy="7" r="2" fill="#887a3a"/><circle cx="13" cy="7" r="1.500" fill="none" stroke="#999"/></svg></s><span class="n">A01_P01_Back_Blouse</span><i class="o"></i></div>
<div class="r"><i class="e"></i><b class="w" style="background:#f09090"></b><i class="v"></i><s class="t"><svg viewBox="0 0 15 15"><path d="M5,6v3" stroke="#666" stroke-width="1.200"/><path d="M14,5v3" stroke="#333" stroke-width="2"/></svg></s><span class="n">A01_P01_L_Sleeve</span><i class="o"></i></div>
<div class="r"><i class="e"></i><b class="w" style="background:#ee6510"></b><i class="v"></i><s class="t"><svg viewBox="0 0 15 15"><path d="M2,6v3" stroke="#777" stroke-width="1.200"/><path d="M14,5v5" stroke="#555" stroke-width="2"/></svg></s><span class="n">A01_P01_L_Arm</span><i class="o"></i></div>
<div class="r"><i class="e"></i><b class="w" style="background:#8898ee"></b><i class="v"></i><s class="t"><svg viewBox="0 0 15 15"><path d="M1,8h3M12,8h3" stroke="#333" stroke-width="1.200"/></svg></s><span class="n">A01_P01_L_ForeArm</span><i class="o"></i></div>
<div class="r"><i class="e"></i><b class="w" style="background:#b00808"></b><i class="v"></i><s class="t"><svg viewBox="0 0 15 15"><path d="M4,8h2M13,7h2" stroke="#222" stroke-width="1.200"/></svg></s><span class="n">A01_P01_L_Hand</span><i class="o"></i></div>
<div class="r"><i class="e"></i><b class="w" style="background:#c89868"></b><i class="v"></i><s class="t"><svg viewBox="0 0 15 15"><path d="M4,5l-1,5" stroke="#555"/><path d="M13,4h2v8h-2z" fill="#333"/></svg></s><span class="n">A01_P01_L_LowerLeg</span><i class="o"></i></div>
<div class="r"><i class="e"></i><b class="w" style="background:#ee55ee"></b><i class="v"></i><s class="t"><svg viewBox="0 0 15 15"><path d="M1,5h3v5h-3z" fill="#227080"/><circle cx="14" cy="7" r="2.500" fill="none" stroke="#333"/></svg></s><span class="n">A01_P01_Back Hair</span><i class="o"></i></div>
<div class="r"><i class="e"></i><b class="w" style="background:#8830e0"></b><i class="v"></i><s class="t"><svg viewBox="0 0 15 15"><path d="M2,4l2,6" stroke="#ecc"/><circle cx="14" cy="8" r="2.500" fill="none" stroke="#999"/></svg></s><span class="n">A01_P01_R_UpperLeg</span><i class="o"></i></div>
<div class="r"><i class="e"></i><b class="w" style="background:#c8a068"></b><i class="v"></i><s class="t"><svg viewBox="0 0 15 15"><path d="M2,6v2" stroke="#ecc"/><circle cx="13" cy="7" r="1.500" fill="none" stroke="#bbb"/></svg></s><span class="n">A01_P01_Pelvis</span><i class="o"></i></div>
<div class="r"><i class="e"></i><b class="w" style="background:#108e8e"></b><i class="v"></i><s class="t"><svg viewBox="0 0 15 15"><path d="M2,4v6" stroke="#ccc"/><circle cx="14" cy="8" r="2.500" fill="none" stroke="#999"/></svg></s><span class="n">A01_P01_L_UpperLeg</span><i class="o"></i></div>
<div class="r"><b class="w" style="background:#085810"></b><i class="v"></i><s class="t"><svg viewBox="0 0 15 15"><path d="M5,2l5,8" stroke="#eee"/></svg></s><span class="n">A01_P01_Sketches</span><i class="o f"></i></div>
</div>
<svg width="8" height="8" style="position:absolute;left:420px;top:856px"><path d="M1,1h6l-3,4z" fill="#ccc"/></svg>
</div>
</body></html>
